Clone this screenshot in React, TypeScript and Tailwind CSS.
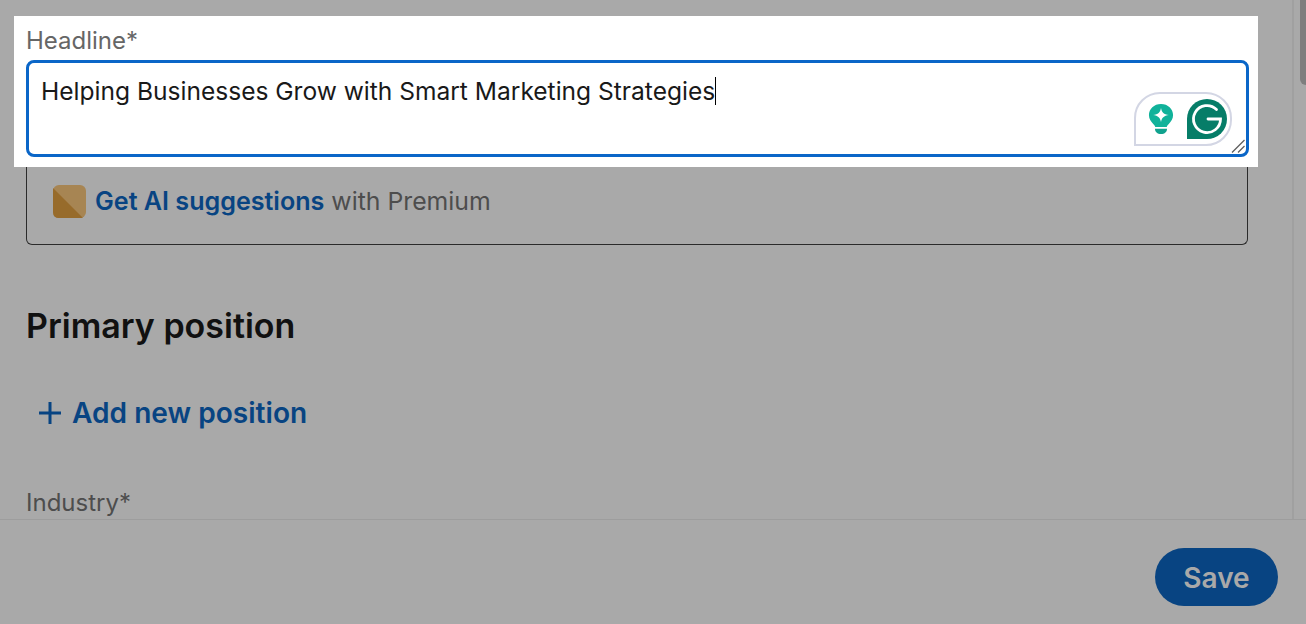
const font = "font-['Inter','Liberation_Sans',sans-serif]";

function PremiumIcon() {
  return (
    <svg width="33" height="33" viewBox="0 0 33 33" className="shrink-0">
      <rect width="33" height="33" rx="6" fill="#a78553" />
      <path d="M0 3 L30 33 L6 33 Q0 33 0 27 Z" fill="#976b2b" />
    </svg>
  );
}

function BulbIcon() {
  return (
    <svg width="26" height="32" viewBox="0 0 28 36" preserveAspectRatio="none" className="shrink-0">
      <path
        d="M14 1C6.500 1 1 6.600 1 13.600c0 4.400 2.200 7.600 4.600 9.900 1.300 1.200 1.900 2.100 2.200 3.500h12.400c.3-1.400.9-2.300 2.200-3.500 2.400-2.300 4.600-5.500 4.600-9.900C27 6.600 21.500 1 14 1Z"
        fill="#10b29a"
      />
      <path d="M14 5.500c.9 5 3 7.200 8.500 8-5.500.8-7.600 3-8.500 8-.9-5-3-7.200-8.500-8 5.500-.8 7.600-3 8.500-8Z" fill="#fff" />
      <path d="M7.500 29h13c0 3.500-2.500 6-6.500 6s-6.500-2.500-6.500-6Z" fill="#10a28e" />
    </svg>
  );
}

function GrammarlyIcon() {
  return (
    <svg width="40" height="40" viewBox="0 0 40 40" className="shrink-0">
      <path d="M20 0a20 20 0 0 1 0 40H0V20A20 20 0 0 1 20 0Z" fill="#067d68" />
      <path
        d="M29.500 10.500A13.500 13.500 0 1 0 33.500 20H21"
        fill="none"
        stroke="#fff"
        strokeWidth="2.800"
        strokeLinecap="round"
      />
    </svg>
  );
}

function ResizeHandle() {
  return (
    <svg width="16" height="16" viewBox="0 0 16 16" className="absolute bottom-0 right-0">
      <path d="M2 14.500 14.500 2M8 14.500 14.500 8" stroke="#5f5f5f" strokeWidth="1.300" fill="none" />
    </svg>
  );
}

export default function App() {
  return (
    <div className={`${font} flex h-[624px] w-[1306px] flex-col overflow-hidden bg-[#a9a9a9]`}>
      <div className="flex min-h-0 flex-1">
        <main className="min-w-0 flex-1 pl-[14px] pt-4">
          <section className="h-[151px] w-[1244px] bg-white px-3">
            <label className="block pt-[10px] text-[24px] leading-[30px] text-[#666666]">Headline*</label>
            <div className="relative mt-[4px] h-[97px] w-[1223px] rounded-[8px] border-[3px] border-[#0a66c8] bg-white px-3 pt-[12px]">
              <span className="flex items-center text-[24.55px] leading-[32px] text-[#191919]">
                Helping Businesses Grow with Smart Marketing Strategies
                <span className="h-[28px] w-px bg-black" />
              </span>
              <div className="absolute bottom-[8px] right-[14px] flex h-[54px] w-[98px] items-center gap-[13px] rounded-t-[26px] rounded-br-[26px] border-2 border-[#d3d6e4] bg-white pl-[12px]">
                <BulbIcon />
                <GrammarlyIcon />
              </div>
              <ResizeHandle />
            </div>
          </section>

          <div className="ml-3 flex h-[78px] w-[1222px] items-center gap-[9px] rounded-b-[6px] border border-t-0 border-[#2b2b2b] pb-2 pl-[26px]">
            <PremiumIcon />
            <span className="text-[24.8px] text-[#4d4d4d]">
              <span className="text-[25.1px] font-semibold text-[#084482]">Get AI suggestions</span> with Premium
            </span>
          </div>

          <h2 className="ml-3 mt-[59px] text-[34px] leading-[44px] font-semibold text-[#111111]">Primary position</h2>

          <button className="ml-6 mt-[47px] flex items-center gap-[10px] text-[28.1px] leading-[36px] font-semibold text-[#084482]">
            <svg width="24" height="24" viewBox="0 0 24 24">
              <path d="M12 1v22M1 12h22" stroke="#084482" strokeWidth="3" />
            </svg>
            Add new position
          </button>

          <p className="ml-3 mt-[57px] text-[24px] leading-[30px] text-[#4d4d4d]">Industry*</p>
        </main>

        <aside className="flex w-[14px] shrink-0">
          <div className="w-[2px] bg-[#a0a0a0]" />
          <div className="ml-[6px] h-[85px] w-[6px] rounded-bl-[6px] bg-[#7e7e7e]" />
        </aside>
      </div>

      <footer className="flex h-[105px] shrink-0 justify-end border-t border-[#9d9d9d] pr-[28px] pt-[28px]">
        <button className="h-[58px] w-[123px] rounded-full bg-[#084482] pt-px text-[28px] font-semibold text-[#a9a9a9]">
          Save
        </button>
      </footer>
    </div>
  );
}
